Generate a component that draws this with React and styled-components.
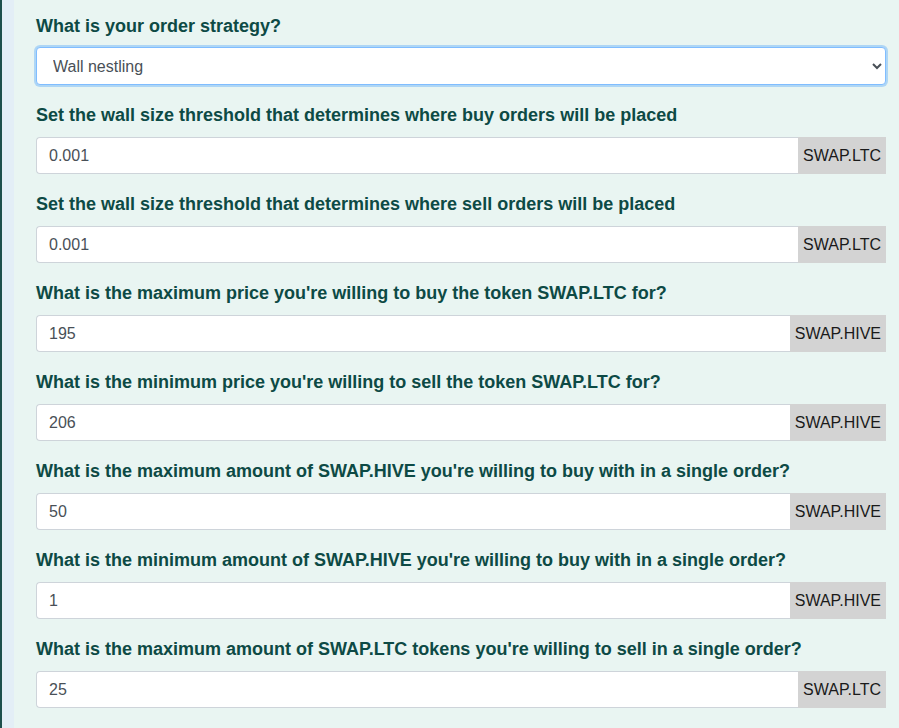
import React from "react";
import styled, { createGlobalStyle } from "styled-components";

const GlobalStyle = createGlobalStyle`
  html, body {
    margin: 0;
    padding: 0;
    background: #e9f5f2;
    font-family: "Liberation Sans", Arial, sans-serif;
  }
`;

const Page = styled.div`
  display: flex;
  min-height: 728px;
`;

const Edge = styled.div`
  width: 2px;
  background: #1d4f4c;
`;

const Strip = styled.div`
  width: 12px;
  background: #e3eef6;
`;

const Content = styled.div`
  flex: 1;
  padding: 14px 13px 0 22px;
`;

const Field = styled.div`
  margin-bottom: 18px;
`;

const Label = styled.label`
  display: block;
  font-size: 18px;
  line-height: 24px;
  font-weight: bold;
  color: #0d4a45;
  margin-bottom: ${(p) => (p.$tight ? "9px" : "10px")};
`;

const Select = styled.select`
  display: block;
  width: 100%;
  height: 38px;
  padding: 0 12px;
  font-size: 16px;
  font-family: "Liberation Sans", Arial, sans-serif;
  color: #495057;
  background: #fff;
  border: 1px solid #80bdff;
  border-radius: 4px;
  box-shadow: 0 0 0 2px rgba(0, 123, 255, 0.25);
  outline: none;
`;

const InputGroup = styled.div`
  display: flex;
  height: 37px;
`;

const Input = styled.input`
  flex: 1;
  min-width: 0;
  box-sizing: border-box;
  height: 100%;
  padding: 0 12px;
  font-size: 16px;
  font-family: "Liberation Sans", Arial, sans-serif;
  color: #495057;
  background: #fff;
  border: 1px solid #ced4da;
  border-right: none;
  border-radius: 4px 0 0 4px;
  outline: none;
`;

const Addon = styled.span`
  display: flex;
  align-items: center;
  padding: 0 5px;
  background: #d3d3d3;
  color: #1a1a1a;
  font-size: 16px;
`;

const fields = [
  { label: "Set the wall size threshold that determines where buy orders will be placed", value: "0.001", unit: "SWAP.LTC" },
  { label: "Set the wall size threshold that determines where sell orders will be placed", value: "0.001", unit: "SWAP.LTC" },
  { label: "What is the maximum price you're willing to buy the token SWAP.LTC for?", value: "195", unit: "SWAP.HIVE" },
  { label: "What is the minimum price you're willing to sell the token SWAP.LTC for?", value: "206", unit: "SWAP.HIVE" },
  { label: "What is the maximum amount of SWAP.HIVE you're willing to buy with in a single order?", value: "50", unit: "SWAP.HIVE" },
  { label: "What is the minimum amount of SWAP.HIVE you're willing to buy with in a single order?", value: "1", unit: "SWAP.HIVE" },
  { label: "What is the maximum amount of SWAP.LTC tokens you're willing to sell in a single order?", value: "25", unit: "SWAP.LTC" },
];

export default function App() {
  return (
    <>
      <GlobalStyle />
      <Page>
        <Edge />
        <Strip />
        <Content>
          <Field>
            <Label $tight>What is your order strategy?</Label>
            <Select defaultValue="wall">
              <option value="wall">Wall nestling</option>
            </Select>
          </Field>
          {fields.map((f, i) => (
            <Field key={i}>
              <Label>{f.label}</Label>
              <InputGroup>
                <Input defaultValue={f.value} />
                <Addon>{f.unit}</Addon>
              </InputGroup>
            </Field>
          ))}
        </Content>
      </Page>
    </>
  );
}
